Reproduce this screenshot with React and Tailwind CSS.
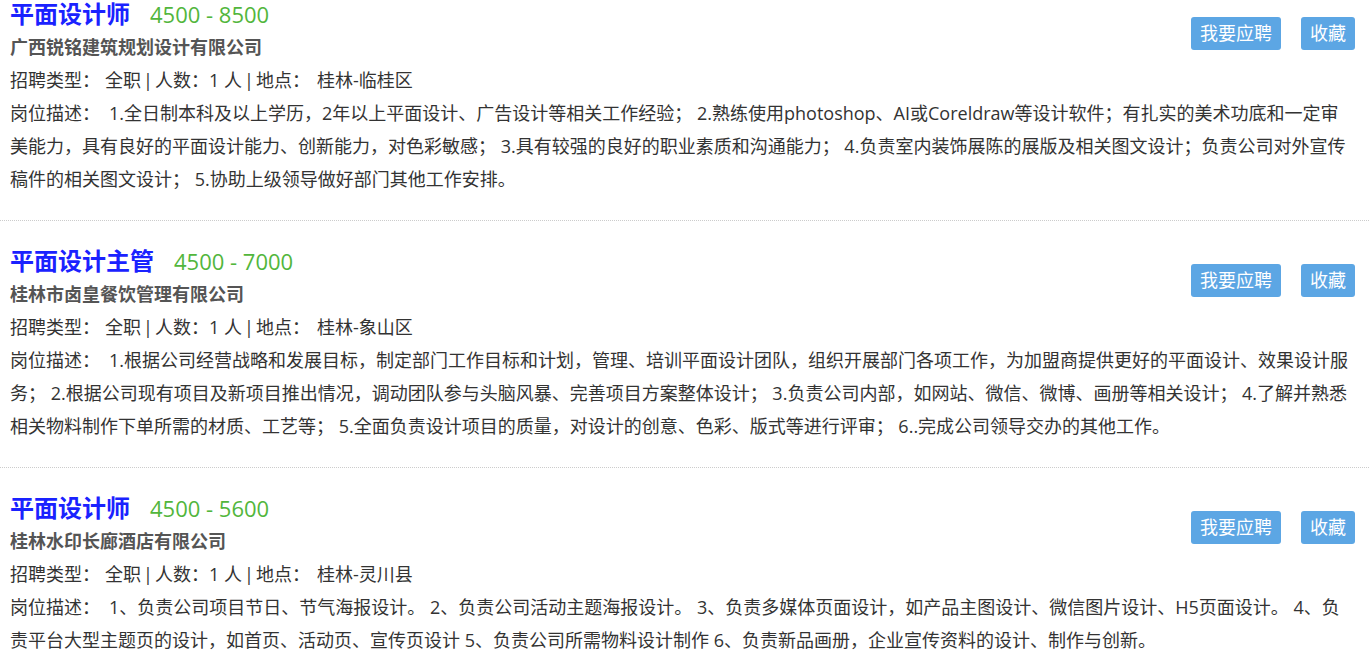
const jobs = [
    {
        title: "平面设计师",
        salary: "4500 - 8500",
        company: "广西锐铭建筑规划设计有限公司",
        place: "桂林-临桂区",
        desc: "1.全日制本科及以上学历，2年以上平面设计、广告设计等相关工作经验； 2.熟练使用photoshop、AI或Coreldraw等设计软件；有扎实的美术功底和一定审美能力，具有良好的平面设计能力、创新能力，对色彩敏感； 3.具有较强的良好的职业素质和沟通能力； 4.负责室内装饰展陈的展版及相关图文设计；负责公司对外宣传稿件的相关图文设计； 5.协助上级领导做好部门其他工作安排。",
    },
    {
        title: "平面设计主管",
        salary: "4500 - 7000",
        company: "桂林市卤皇餐饮管理有限公司",
        place: "桂林-象山区",
        desc: "1.根据公司经营战略和发展目标，制定部门工作目标和计划，管理、培训平面设计团队，组织开展部门各项工作，为加盟商提供更好的平面设计、效果设计服务； 2.根据公司现有项目及新项目推出情况，调动团队参与头脑风暴、完善项目方案整体设计； 3.负责公司内部，如网站、微信、微博、画册等相关设计； 4.了解并熟悉相关物料制作下单所需的材质、工艺等； 5.全面负责设计项目的质量，对设计的创意、色彩、版式等进行评审； 6..完成公司领导交办的其他工作。",
    },
    {
        title: "平面设计师",
        salary: "4500 - 5600",
        company: "桂林水印长廊酒店有限公司",
        place: "桂林-灵川县",
        desc: "1、负责公司项目节日、节气海报设计。 2、负责公司活动主题海报设计。 3、负责多媒体页面设计，如产品主图设计、微信图片设计、H5页面设计。 4、负责平台大型主题页的设计，如首页、活动页、宣传页设计 5、负责公司所需物料设计制作 6、负责新品画册，企业宣传资料的设计、制作与创新。",
    },
];

const Bar = () => <span className="inline-block w-[14px] text-center">|</span>;

const JobItem = ({ job, first }) => {
    return (
        <div className={`pl-[10px] pr-[14px] pb-[24px] border-b border-dotted border-[#cccccc] ${first ? "" : "pt-[26px]"}`}>
            <div className="flex justify-between">
                <div>
                    <div className="flex items-baseline h-[31px] leading-[28px]">
                        <span className="text-[24px] font-bold text-[#1a22ff]">{job.title}</span>
                        <span className="ml-[20px] text-[22px] text-[#52b63c]">{job.salary}</span>
                    </div>
                    <div className="text-[18px] leading-[33px] font-bold text-[#555555]">{job.company}</div>
                </div>
                <div className="flex gap-[20px] mt-[17px] h-[33px]">
                    <button className="h-[33px] px-[9px] rounded-[3px] bg-[#5ca6e4] text-white text-[18px] leading-[33px]">我要应聘</button>
                    <button className="h-[33px] px-[9px] rounded-[3px] bg-[#5ca6e4] text-white text-[18px] leading-[33px]">收藏</button>
                </div>
            </div>
            <div className="text-[18px] leading-[33px] text-[#333333]">
                <span>招聘类型：</span>
                <span className="ml-[5px]">全职<Bar />人数：1 人<Bar />地点：</span>
                <span className="ml-[7px]">{job.place}</span>
            </div>
            <div className="text-[18px] leading-[33px] text-[#333333]">
                <span>岗位描述：</span>
                <span className="ml-[9px]">{job.desc}</span>
            </div>
        </div>
    );
};

export default function App() {
    return (
        <div className="w-[1369px] h-[665px] overflow-hidden bg-white" style={{ fontFamily: '"Open Sans", "Noto Sans CJK SC", sans-serif' }}>
            {jobs.map((job, i) => (
                <JobItem key={i} job={job} first={i === 0} />
            ))}
        </div>
    );
}
